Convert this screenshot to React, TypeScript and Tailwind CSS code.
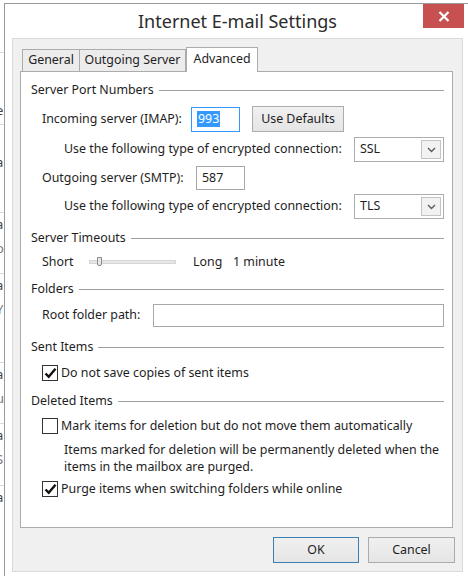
import React from "react";

const font = { fontFamily: '"Noto Sans", "Open Sans", sans-serif' };

function GroupHeader({ label }: { label: string }) {
  return (
    <div className="flex h-[18px] items-center">
      <span className="text-[12.4px] text-[#1e1e1e]">{label}</span>
      <div className="ml-[5px] h-px flex-1 bg-[#a0a0a0]" />
    </div>
  );
}

function TextBox({ value, focused, className }: { value?: string; focused?: boolean; className: string }) {
  return (
    <div
      className={`flex items-center border bg-white px-[5px] text-[12.4px] text-[#1e1e1e] ${
        focused ? "border-[#3399ff]" : "border-[#a8a8a8]"
      } ${className}`}
    >
      {focused ? <span className="bg-[#3399ff] px-px leading-[16px] text-white">{value}</span> : value}
    </div>
  );
}

function Select({ value }: { value: string }) {
  return (
    <div className="ml-auto flex h-[25px] w-[90px] items-center border border-[#acacac] bg-white pl-[5px] pr-[2px] text-[12.4px] text-[#1e1e1e]">
      <span className="flex-1">{value}</span>
      <div className="flex h-[19px] w-[20px] items-center justify-center border border-[#c4c4c4] bg-[#f2f2f2]">
        <svg width="9" height="6" viewBox="0 0 9 6">
          <path d="M1 1l3.5 3.5L8 1" fill="none" stroke="#5a5a5a" strokeWidth="1.4" />
        </svg>
      </div>
    </div>
  );
}

function CheckBox({ checked, label }: { checked?: boolean; label: string }) {
  return (
    <div className="flex h-[18px] items-center pl-[11px]">
      <div className="flex h-[16px] w-[16px] items-center justify-center border border-[#333] bg-white">
        {checked && (
          <svg width="13" height="12" viewBox="0 0 13 12">
            <path d="M1.5 6.5l3.2 3.2L11.5 1.8" fill="none" stroke="#111" strokeWidth="2.4" />
          </svg>
        )}
      </div>
      <span className="ml-[3px] text-[12.4px] text-[#1e1e1e]">{label}</span>
    </div>
  );
}

function Button({ label, primary, className }: { label: string; primary?: boolean; className: string }) {
  return (
    <div
      className={`flex items-center justify-center border bg-gradient-to-b from-[#f0f0f0] to-[#e5e5e5] text-[12.4px] text-[#1e1e1e] ${
        primary ? "border-[#3c7fb1]" : "border-[#acacac]"
      } ${className}`}
    >
      {label}
    </div>
  );
}

// bits of the mail list behind the dialog
const bgRows = [
  { h: 18, a: "l", b: "", sep: false },
  { h: 20, a: "i", b: "", sep: false },
  { h: 22, a: ":", b: "", sep: true },
  { h: 25, a: "i", b: "", sep: false },
  { h: 25, a: "e", b: "", sep: false },
  { h: 27, a: "(", b: "", sep: true },
  { h: 61, a: "a", b: "l", sep: false },
  { h: 61, a: "a", b: "o", sep: true },
  { h: 89, a: "a", b: "Y", sep: true },
  { h: 61, a: "a", b: "u", sep: true },
  { h: 62, a: "a", b: "S", sep: true },
  { h: 40, a: "a", b: "", sep: true },
];

export default function App() {
  return (
    <div className="flex h-[576px] w-[468px] overflow-hidden bg-white" style={font}>
      <div className="flex w-[4px] shrink-0 flex-col overflow-hidden pt-[14px] text-[13px] leading-[16px] text-[#444]">
        {bgRows.map((r, i) => (
          <div
            key={i}
            className={`flex shrink-0 flex-col overflow-hidden pt-[3px] ${r.sep ? "border-t border-[#dadada]" : ""}`}
            style={{ height: r.h }}
          >
            <span className="-ml-[4px]">{r.a}</span>
            {r.b && <span className="-ml-[4px] mt-[8px] text-[#777]">{r.b}</span>}
          </div>
        ))}
      </div>

      <div className="flex flex-1 flex-col">
        <div className="h-[3px] shrink-0" />
        <div className="flex w-[466px] flex-1 flex-col border-l border-t border-[#9a9a9a] bg-white">
          <div className="grid h-[34px] grid-cols-[1fr_auto_1fr]">
            <div />
            <div className="pt-[4px] text-[18px] text-[#2b2b2b]">Internet E-mail Settings</div>
            <div className="flex justify-end pr-[6px]">
              <div className="flex h-[24px] w-[41px] items-center justify-center bg-[#c75050]">
                <svg width="12" height="11" viewBox="0 0 12 11">
                  <path d="M1.5 1l9 9M10.5 1l-9 9" stroke="#fff" strokeWidth="2.2" />
                </svg>
              </div>
            </div>
          </div>

          <div className="ml-[7px] flex h-[534px] w-[451px] flex-col border border-[#dadada] bg-[#f0f0f0] pl-[7px] pr-[9px]">
            <div className="flex h-[32px] items-end pl-[2px]">
              <div className="flex h-[22px] w-[58px] items-center justify-center border border-b-0 border-[#acacac] bg-[#ececec] text-[12.4px] text-[#1e1e1e]">
                General
              </div>
              <div className="flex h-[22px] w-[106px] items-center justify-center border border-b-0 border-l-0 border-[#acacac] bg-[#ececec] text-[12.4px] text-[#1e1e1e]">
                Outgoing Server
              </div>
              <div className="relative z-10 -mb-px flex h-[25px] w-[72px] items-start justify-center border border-b-0 border-[#acacac] bg-white pt-[2px] text-[12.4px] text-[#1e1e1e]">
                Advanced
              </div>
            </div>

            <div className="flex h-[457px] flex-col border border-[#acacac] bg-white pl-[10px] pr-[8px] text-[12.4px] text-[#1e1e1e]">
              <div className="mt-[9px]">
                <GroupHeader label="Server Port Numbers" />
              </div>
              <div className="mt-[7px] flex h-[26px] items-center pl-[11px]">
                <span className="w-[149px]">Incoming server (IMAP):</span>
                <TextBox value="993" focused className="h-[25px] w-[49px]" />
                <Button label="Use Defaults" className="ml-[12px] h-[26px] w-[92px]" />
              </div>
              <div className="mt-[5px] flex h-[25px] items-center pl-[33px]">
                <span>Use the following type of encrypted connection:</span>
                <Select value="SSL" />
              </div>
              <div className="mt-[4px] flex h-[24px] items-center pl-[11px]">
                <span className="w-[154px]">Outgoing server (SMTP):</span>
                <TextBox value="587" className="h-[24px] w-[49px]" />
              </div>
              <div className="mt-[4px] flex h-[25px] items-center pl-[33px]">
                <span>Use the following type of encrypted connection:</span>
                <Select value="TLS" />
              </div>

              <div className="mt-[10px]">
                <GroupHeader label="Server Timeouts" />
              </div>
              <div className="mt-[6px] flex h-[18px] items-center pl-[11px]">
                <span className="w-[47px]">Short</span>
                <div className="relative h-[4px] w-[87px] border border-[#d6d6d6] bg-[#e7e7e7]">
                  <div className="absolute -top-[4px] left-[7px] h-[9px] w-[5px] rounded-b-[2px] border border-[#8a8a8a] bg-[#e8e8e8]" />
                </div>
                <span className="ml-[17px] w-[40px]">Long</span>
                <span>1 minute</span>
              </div>

              <div className="mt-[9px]">
                <GroupHeader label="Folders" />
              </div>
              <div className="mt-[6px] flex h-[23px] items-center pl-[11px]">
                <span className="w-[111px]">Root folder path:</span>
                <TextBox className="h-[23px] flex-1" />
              </div>

              <div className="mt-[11px]">
                <GroupHeader label="Sent Items" />
              </div>
              <div className="mt-[8px]">
                <CheckBox checked label="Do not save copies of sent items" />
              </div>

              <div className="mt-[10px]">
                <GroupHeader label="Deleted Items" />
              </div>
              <div className="mt-[7px]">
                <CheckBox label="Mark items for deletion but do not move them automatically" />
              </div>
              <div className="mt-[6px] pl-[33px] leading-[17px]">
                Items marked for deletion will be permanently deleted when the
                <br />
                items in the mailbox are purged.
              </div>
              <div className="mt-[5px]">
                <CheckBox checked label="Purge items when switching folders while online" />
              </div>
            </div>

            <div className="mt-[9px] flex justify-end gap-[9px]">
              <Button label="OK" primary className="h-[26px] w-[86px]" />
              <Button label="Cancel" className="mr-[-2px] h-[26px] w-[87px]" />
            </div>
          </div>
        </div>
      </div>
    </div>
  );
}
